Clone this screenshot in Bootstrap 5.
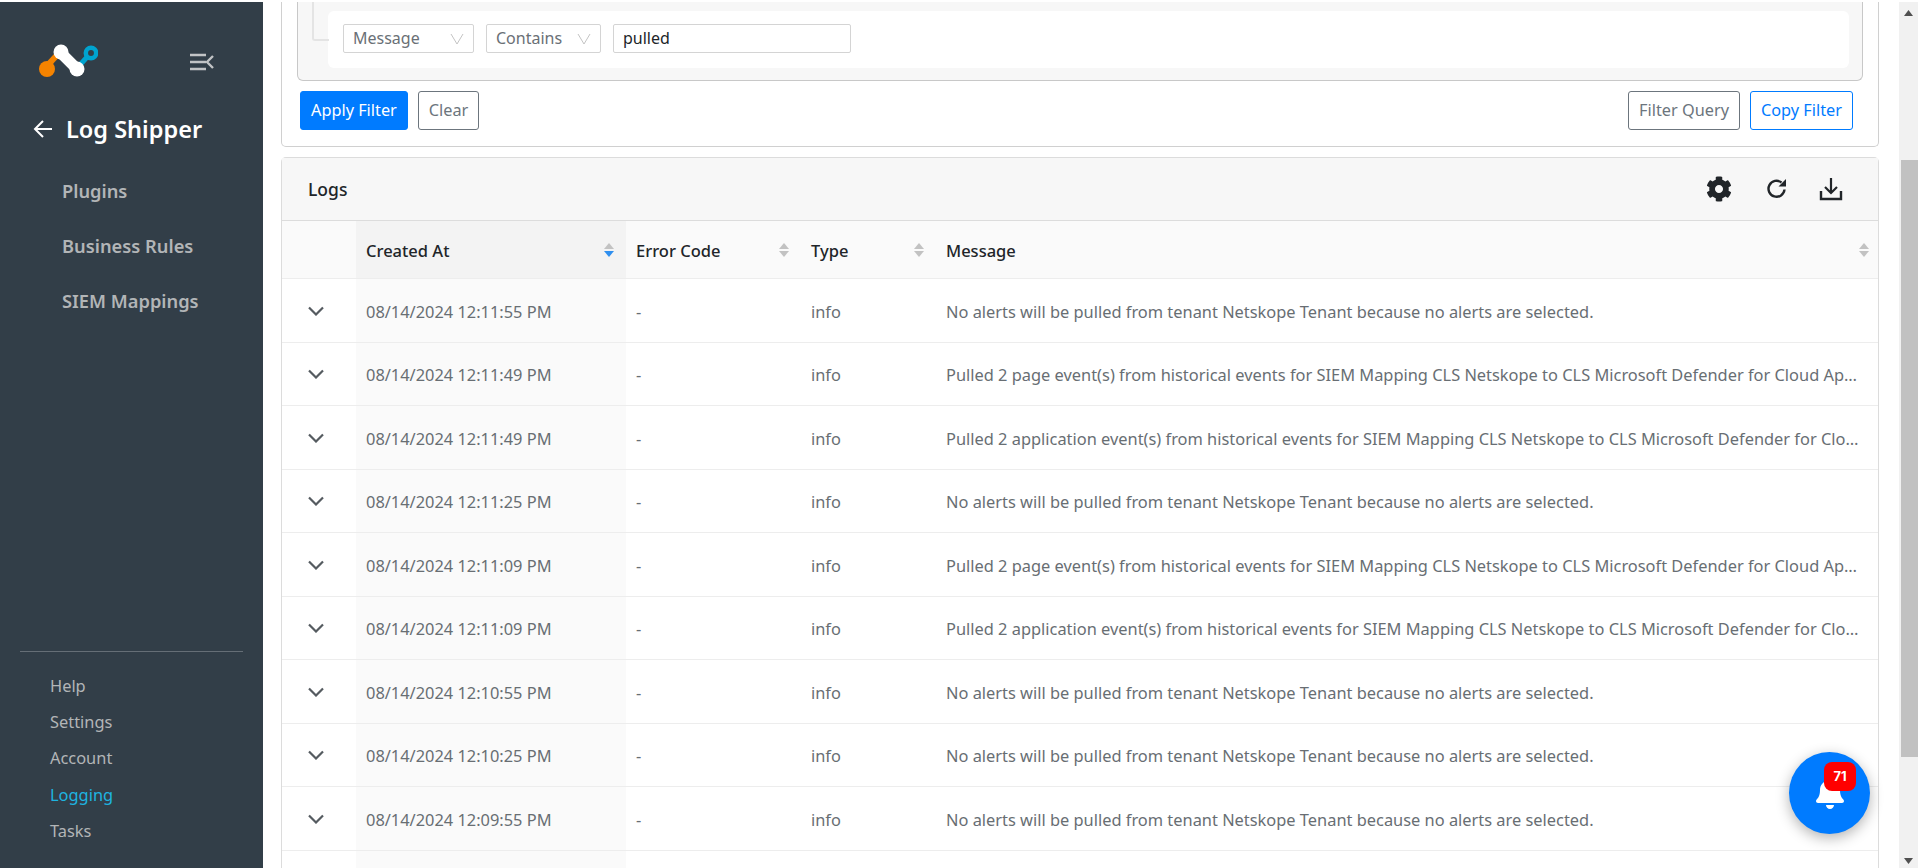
<!DOCTYPE html>
<html lang="en">
<head>
<meta charset="UTF-8">
<title>Log Shipper - Logging</title>
<link href="https://cdn.jsdelivr.net/npm/bootstrap@5.3.3/dist/css/bootstrap.min.css" rel="stylesheet">
<script src="https://cdn.jsdelivr.net/npm/bootstrap@5.3.3/dist/js/bootstrap.bundle.min.js"></script>
<style>
  html, body { height: 868px; overflow: hidden; }
  body { font-family: "Noto Sans", "Open Sans", sans-serif; font-size: 16px; background: #fff; padding-top: 2px; position: relative; }
  .app-wrap { height: 866px; overflow: hidden; }

  /* sidebar */
  .side-bar { width: 263px; flex: none; background: #323e48; }
  .side-top { height: 74px; padding: 40px 0 0 0; }
  .side-logo { margin-left: 38px; display: block; }
  .side-toggle { margin-left: 91px; margin-top: 11px; display: block; }
  .side-title { color: #fff; font-size: 23.5px; font-weight: 600; margin-top: 37px; padding-left: 33px; gap: 13px; line-height: 32px; }
  .side-menu a { display: block; color: #b2b5b7; font-size: 18.3px; font-weight: 600; text-decoration: none; padding-left: 62px; height: 55px; line-height: 55px; }
  .side-menu { margin-top: 18px; }
  .side-foot { margin-top: auto; padding-bottom: 19px; }
  .side-foot hr { margin: 0 20px 16px; border-top: 1px solid #fff; opacity: .25; }
  .side-foot a { display: block; color: #b2b5b7; font-size: 16.4px; text-decoration: none; padding-left: 50px; height: 36.2px; line-height: 36.2px; }
  .side-foot a.is-active { color: #1eb4e0; }

  /* main column */
  .main-col { flex: 1 1 auto; min-width: 0; padding: 0 20px 0 18px; }
  .filter-card { border-top: 0; border-radius: 0 0 5px 5px; border-color: #d0d0d0; height: 144.5px; padding: 0 15px; }
  .filter-box { height: 78.5px; background: #f7f7f7; border: 1px solid #c8c8c8; border-top: 0; border-radius: 0 0 6px 6px; padding: 9px 13px 0 15px; position: relative; }
  .filter-link { position: absolute; left: 14px; top: 0; width: 17px; height: 39px; border: 2px solid #e4e4e4; border-top: 0; border-right: 0; border-radius: 0 0 0 3px; }
  .filter-row { height: 57px; background: #fff; border-radius: 6px; padding: 13px 0 0 15px; margin-left: 15px; gap: 12px; }
  .filter-ctl { height: 29px; border: 1px solid #d4d4d4; border-radius: 2px; font-size: 16px; color: #6a7076; padding: 0 9px; line-height: 27px; }
  .ctl-field { width: 131px; }
  .ctl-op { width: 115px; }
  .ctl-val { width: 238px; color: #212529; }
  .filter-actions { margin-top: 10px; padding: 0 10px 0 3px; gap: 10px; }
  .filter-actions .btn { height: 39px; font-size: 16.3px; padding: 0 10px; line-height: 37px; border-radius: 3px; }
  .filter-actions .btn-primary { background: #007bff; border-color: #007bff; }
  .filter-actions .btn-outline-primary { color: #007bff; border-color: #007bff; }

  /* logs card */
  .logs-card { margin-top: 10.5px; border-color: #dcdcdc; border-radius: 5px 5px 0 0; border-bottom: 0; }
  .logs-head { height: 63px; background: #f7f7f7; border-bottom: 1px solid #dcdcdc; padding: 0 35px 0 26px; font-size: 17.5px; font-weight: 500; color: #212529; }
  .tool-refresh { margin-left: 34px; }
  .tool-download { margin-left: 31px; }
  .logs-table { table-layout: fixed; width: 100%; margin: 0; border-collapse: collapse; }
  .logs-table th { height: 57.5px; background: #fafafa; font-size: 16.5px; font-weight: 500; color: #212529; padding: 3px 10px 0; vertical-align: middle; border-bottom: 1px solid #ededed; position: relative; }
  .logs-table td { height: 63.5px; padding: 4px 10px 0; vertical-align: middle; font-size: 16.4px; color: #686e73; border-bottom: 1px solid #ededed; white-space: nowrap; overflow: hidden; text-overflow: ellipsis; }
  .logs-table th.col-sorted { background: #f3f3f3; }
  .logs-table td.col-sorted { background: #fafafa; }
  .logs-table td.col-toggle { padding-left: 26px; }
  .logs-table td.col-toggle svg { display: block; margin-top: -3px; }
  .logs-table .col-pad { padding-left: 13px; }
  .logs-table td.col-msg { padding-right: 16px; }
  .sort-mark { position: absolute; right: 8px; top: 21px; }
  .col-sorted .sort-mark { right: 11px; }

  /* fake scrollbar */
  .page-scroll { width: 19px; flex: none; background: #f1f1f1; position: relative; }
  .scroll-thumb { position: absolute; left: 2px; right: 0; top: 158px; height: 597px; background: #c1c1c1; }
  .scroll-up, .scroll-down { position: absolute; left: 5px; }
  .scroll-up { top: 8px; }
  .scroll-down { bottom: 4px; }

  /* notification button */
  .notify-btn { position: absolute; left: 1789px; top: 752px; width: 81px; height: 82px; border-radius: 50%; background: #007bff; box-shadow: 0 4px 14px rgba(0,0,0,.3); }
  .notify-btn svg { position: absolute; left: 25px; top: 25px; }
  .notify-count { position: absolute; left: 35px; top: 10px; width: 32px; height: 29px; border-radius: 8px; background: #f00; color: #fff; font-size: 13px; font-weight: 700; text-align: center; line-height: 29px; font-family: "Inter", "Noto Sans", sans-serif; }
</style>
</head>
<body>
<div class="app-wrap d-flex">

  <aside class="side-bar d-flex flex-column">
    <div class="d-flex align-items-start side-top">
      <svg class="side-logo" width="60" height="36" viewBox="0 0 60 36">
        <path d="M9 24 L20 12" stroke="#f58300" stroke-width="6" fill="none"/>
        <circle cx="9" cy="27" r="8" fill="#f58300"/>
        <path d="M41 24 L50 14" stroke="#00a3cf" stroke-width="5" fill="none"/>
        <circle cx="53" cy="11" r="5.2" fill="none" stroke="#00a3cf" stroke-width="4.5"/>
        <path d="M23 11 L39 27" stroke="#fff" stroke-width="11" stroke-linecap="round" fill="none"/>
        <circle cx="23" cy="10" r="7.5" fill="#fff"/>
        <circle cx="39" cy="27" r="7.5" fill="#fff"/>
      </svg>
      <svg class="side-toggle" width="25" height="18" viewBox="0 0 25 18">
        <path d="M1 2h16M1 9h16M1 16h16" stroke="#c2c4c6" stroke-width="2.4" fill="none"/>
        <path d="M24 3l-6 6 6 6" stroke="#c2c4c6" stroke-width="2.4" fill="none"/>
      </svg>
    </div>
    <div class="side-title d-flex align-items-center">
      <svg width="20" height="20" viewBox="0 0 20 20"><path d="M19 10H2M10 2l-8 8 8 8" stroke="#fff" stroke-width="2" fill="none"/></svg>
      <span>Log Shipper</span>
    </div>
    <nav class="side-menu">
      <a href="#">Plugins</a>
      <a href="#">Business Rules</a>
      <a href="#">SIEM Mappings</a>
    </nav>
    <div class="side-foot">
      <hr>
      <a href="#">Help</a>
      <a href="#">Settings</a>
      <a href="#">Account</a>
      <a href="#" class="is-active">Logging</a>
      <a href="#">Tasks</a>
    </div>
  </aside>

  <main class="main-col">
    <div class="card filter-card">
      <div class="filter-box">
        <span class="filter-link"></span>
        <div class="filter-row d-flex">
          <div class="filter-ctl ctl-field d-flex justify-content-between align-items-center">
            <span>Message</span>
            <svg width="14" height="12" viewBox="0 0 14 12"><path d="M1 1l6 10 6-10" stroke="#c4c4c4" fill="none"/></svg>
          </div>
          <div class="filter-ctl ctl-op d-flex justify-content-between align-items-center">
            <span>Contains</span>
            <svg width="14" height="12" viewBox="0 0 14 12"><path d="M1 1l6 10 6-10" stroke="#c4c4c4" fill="none"/></svg>
          </div>
          <div class="filter-ctl ctl-val">pulled</div>
        </div>
      </div>
      <div class="filter-actions d-flex">
        <button class="btn btn-primary" type="button">Apply Filter</button>
        <button class="btn btn-outline-secondary" type="button">Clear</button>
        <button class="btn btn-outline-secondary ms-auto" type="button">Filter Query</button>
        <button class="btn btn-outline-primary" type="button">Copy Filter</button>
      </div>
    </div>

    <div class="card logs-card">
      <div class="logs-head d-flex align-items-center justify-content-between">
        <span>Logs</span>
        <div class="d-flex align-items-center">
          <svg width="26" height="26" viewBox="0 0 512 512"><path fill="#212529" d="M487.4 315.7l-42.6-24.6c4.3-23.2 4.3-47 0-70.2l42.6-24.6c4.9-2.8 7.1-8.6 5.5-14-11.1-35.6-30-67.8-54.7-94.6-3.8-4.1-10-5.1-14.8-2.3L380.8 110c-17.9-15.4-38.5-27.3-60.8-35.1V25.8c0-5.6-3.9-10.5-9.4-11.7-36.7-8.2-74.3-7.8-109.2 0-5.5 1.2-9.4 6.1-9.4 11.7V75c-22.2 7.9-42.8 19.8-60.8 35.1L88.7 85.5c-4.9-2.8-11-1.9-14.8 2.3-24.7 26.7-43.6 58.9-54.7 94.6-1.7 5.4.6 11.2 5.5 14L67.3 221c-4.3 23.2-4.3 47 0 70.2l-42.6 24.6c-4.9 2.8-7.1 8.6-5.5 14 11.1 35.6 30 67.8 54.7 94.6 3.8 4.1 10 5.1 14.8 2.3l42.6-24.6c17.9 15.4 38.5 27.3 60.8 35.1v49.2c0 5.6 3.9 10.5 9.4 11.7 36.7 8.2 74.3 7.8 109.2 0 5.5-1.2 9.4-6.1 9.4-11.7v-49.2c22.2-7.9 42.8-19.8 60.8-35.1l42.6 24.6c4.9 2.8 11 1.9 14.8-2.3 24.7-26.7 43.6-58.9 54.7-94.6 1.5-5.5-.7-11.3-5.6-14.1zM256 336c-44.1 0-80-35.9-80-80s35.9-80 80-80 80 35.9 80 80-35.9 80-80 80z"/></svg>
          <svg class="tool-refresh" width="22" height="22" viewBox="0 0 22 22"><path d="M18.5 11.5A8 8 0 1 1 15.5 4.5" stroke="#212529" stroke-width="2.4" fill="none"/><path d="M20 1v7.5h-7.5z" fill="#212529"/></svg>
          <svg class="tool-download" width="24" height="24" viewBox="0 0 24 24"><path d="M12 1v14M6 10l6 6 6-6" stroke="#212529" stroke-width="2.2" fill="none"/><path d="M2 14v8h20v-8" stroke="#212529" stroke-width="2.4" fill="none"/></svg>
        </div>
      </div>
      <table class="logs-table">
        <colgroup><col style="width:74px"><col style="width:270px"><col style="width:172px"><col style="width:135px"><col></colgroup>
        <thead>
          <tr>
            <th></th>
            <th class="col-sorted">Created At
              <svg class="sort-mark" width="12" height="16" viewBox="0 0 12 16"><path d="M6 1l5 6H1z" fill="#c2c2c2"/><path d="M6 15l5-6H1z" fill="#2f8fef"/></svg>
            </th>
            <th>Error Code
              <svg class="sort-mark" width="12" height="16" viewBox="0 0 12 16"><path d="M6 1l5 6H1z" fill="#c2c2c2"/><path d="M6 15l5-6H1z" fill="#c2c2c2"/></svg>
            </th>
            <th class="col-pad">Type
              <svg class="sort-mark" width="12" height="16" viewBox="0 0 12 16"><path d="M6 1l5 6H1z" fill="#c2c2c2"/><path d="M6 15l5-6H1z" fill="#c2c2c2"/></svg>
            </th>
            <th class="col-pad">Message
              <svg class="sort-mark" width="12" height="16" viewBox="0 0 12 16"><path d="M6 1l5 6H1z" fill="#c2c2c2"/><path d="M6 15l5-6H1z" fill="#c2c2c2"/></svg>
            </th>
          </tr>
        </thead>
        <tbody>
          <tr><td class="col-toggle"><svg width="16" height="10" viewBox="0 0 16 10"><path d="M1 1.5l7 7 7-7" stroke="#555b60" stroke-width="2.2" fill="none"/></svg></td><td class="col-sorted">08/14/2024 12:11:55 PM</td><td>-</td><td class="col-pad">info</td><td class="col-pad col-msg">No alerts will be pulled from tenant Netskope Tenant because no alerts are selected.</td></tr>
          <tr><td class="col-toggle"><svg width="16" height="10" viewBox="0 0 16 10"><path d="M1 1.5l7 7 7-7" stroke="#555b60" stroke-width="2.2" fill="none"/></svg></td><td class="col-sorted">08/14/2024 12:11:49 PM</td><td>-</td><td class="col-pad">info</td><td class="col-pad col-msg">Pulled 2 page event(s) from historical events for SIEM Mapping CLS Netskope to CLS Microsoft Defender for Cloud Apps.</td></tr>
          <tr><td class="col-toggle"><svg width="16" height="10" viewBox="0 0 16 10"><path d="M1 1.5l7 7 7-7" stroke="#555b60" stroke-width="2.2" fill="none"/></svg></td><td class="col-sorted">08/14/2024 12:11:49 PM</td><td>-</td><td class="col-pad">info</td><td class="col-pad col-msg">Pulled 2 application event(s) from historical events for SIEM Mapping CLS Netskope to CLS Microsoft Defender for Cloud Apps.</td></tr>
          <tr><td class="col-toggle"><svg width="16" height="10" viewBox="0 0 16 10"><path d="M1 1.5l7 7 7-7" stroke="#555b60" stroke-width="2.2" fill="none"/></svg></td><td class="col-sorted">08/14/2024 12:11:25 PM</td><td>-</td><td class="col-pad">info</td><td class="col-pad col-msg">No alerts will be pulled from tenant Netskope Tenant because no alerts are selected.</td></tr>
          <tr><td class="col-toggle"><svg width="16" height="10" viewBox="0 0 16 10"><path d="M1 1.5l7 7 7-7" stroke="#555b60" stroke-width="2.2" fill="none"/></svg></td><td class="col-sorted">08/14/2024 12:11:09 PM</td><td>-</td><td class="col-pad">info</td><td class="col-pad col-msg">Pulled 2 page event(s) from historical events for SIEM Mapping CLS Netskope to CLS Microsoft Defender for Cloud Apps.</td></tr>
          <tr><td class="col-toggle"><svg width="16" height="10" viewBox="0 0 16 10"><path d="M1 1.5l7 7 7-7" stroke="#555b60" stroke-width="2.2" fill="none"/></svg></td><td class="col-sorted">08/14/2024 12:11:09 PM</td><td>-</td><td class="col-pad">info</td><td class="col-pad col-msg">Pulled 2 application event(s) from historical events for SIEM Mapping CLS Netskope to CLS Microsoft Defender for Cloud Apps.</td></tr>
          <tr><td class="col-toggle"><svg width="16" height="10" viewBox="0 0 16 10"><path d="M1 1.5l7 7 7-7" stroke="#555b60" stroke-width="2.2" fill="none"/></svg></td><td class="col-sorted">08/14/2024 12:10:55 PM</td><td>-</td><td class="col-pad">info</td><td class="col-pad col-msg">No alerts will be pulled from tenant Netskope Tenant because no alerts are selected.</td></tr>
          <tr><td class="col-toggle"><svg width="16" height="10" viewBox="0 0 16 10"><path d="M1 1.5l7 7 7-7" stroke="#555b60" stroke-width="2.2" fill="none"/></svg></td><td class="col-sorted">08/14/2024 12:10:25 PM</td><td>-</td><td class="col-pad">info</td><td class="col-pad col-msg">No alerts will be pulled from tenant Netskope Tenant because no alerts are selected.</td></tr>
          <tr><td class="col-toggle"><svg width="16" height="10" viewBox="0 0 16 10"><path d="M1 1.5l7 7 7-7" stroke="#555b60" stroke-width="2.2" fill="none"/></svg></td><td class="col-sorted">08/14/2024 12:09:55 PM</td><td>-</td><td class="col-pad">info</td><td class="col-pad col-msg">No alerts will be pulled from tenant Netskope Tenant because no alerts are selected.</td></tr>
          <tr><td></td><td class="col-sorted"></td><td></td><td></td><td></td></tr>
        </tbody>
      </table>
    </div>
  </main>

  <div class="page-scroll">
    <svg class="scroll-up" width="9" height="6" viewBox="0 0 9 6"><path d="M4.500 0L9 6H0z" fill="#505050"/></svg>
    <div class="scroll-thumb"></div>
    <svg class="scroll-down" width="9" height="6" viewBox="0 0 9 6"><path d="M4.500 6L9 0H0z" fill="#505050"/></svg>
  </div>
</div>

<div class="notify-btn">
  <svg width="32" height="32" viewBox="0 0 448 512"><path fill="#fff" d="M224 512c35.300 0 64-28.700 64-64H160c0 35.300 28.700 64 64 64zm215.400-149.700c-19.300-20.800-55.500-52-55.500-154.300 0-77.700-54.500-139.900-127.900-155.200V32c0-17.700-14.300-32-32-32s-32 14.300-32 32v20.800C118.600 68.100 64.100 130.300 64.100 208c0 102.300-36.200 133.500-55.500 154.300-6 6.400-8.700 14.100-8.600 21.700.1 16.400 13 32 32.100 32h383.800c19.100 0 32-15.600 32.100-32 .1-7.600-2.600-15.300-8.600-21.700z"/></svg>
  <span class="notify-count">71</span>
</div>
</body>
</html>
